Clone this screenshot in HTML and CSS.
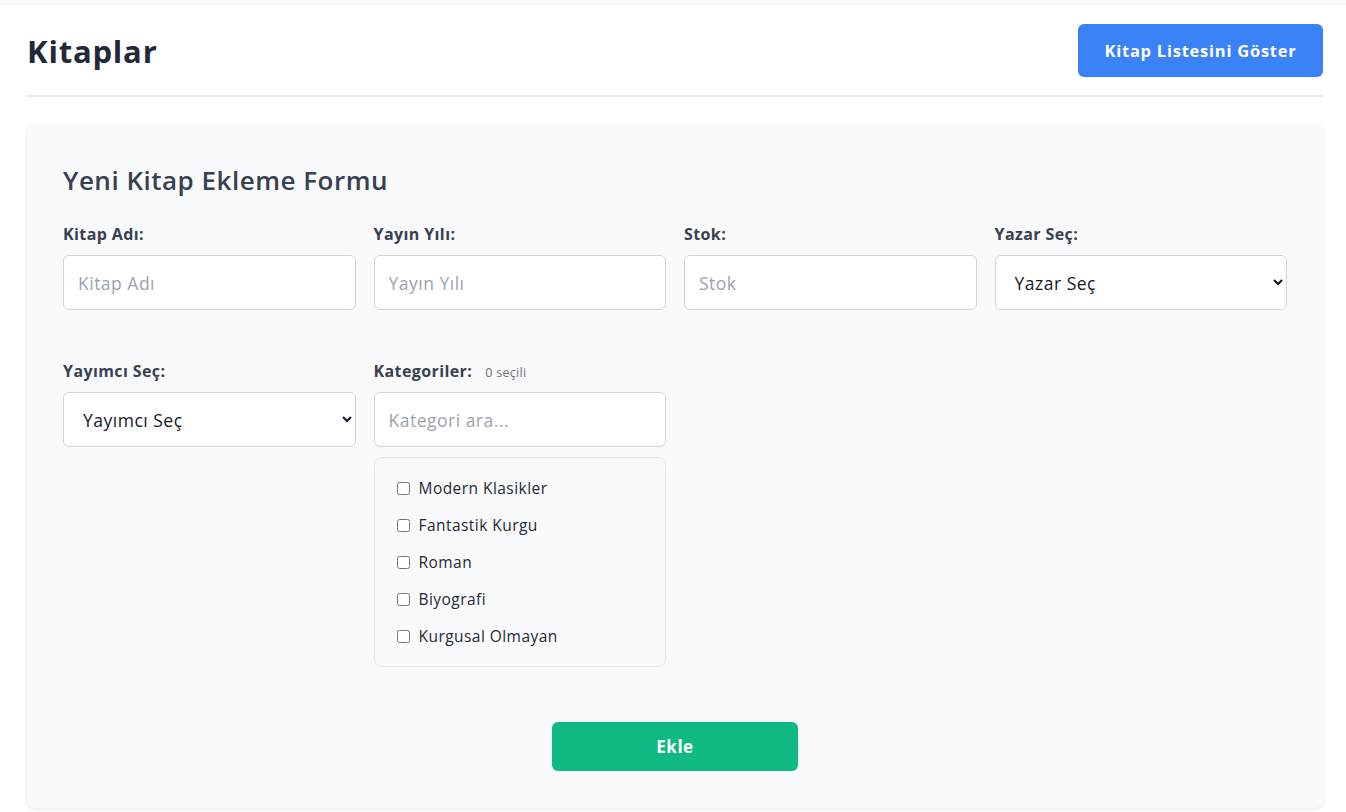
FILE: index.html
```html
<!DOCTYPE html>
<html lang="tr">
<head>
<meta charset="utf-8">
<title>Kitaplar</title>
<link rel="stylesheet" href="styles.css">
</head>
<body>
<div class="page">
  <header class="topbar">
    <h1 class="title">Kitaplar</h1>
    <button class="btn-blue" type="button">Kitap Listesini Göster</button>
  </header>
  <section class="card">
    <h2 class="card-title">Yeni Kitap Ekleme Formu</h2>
    <form class="form">
      <div class="grid">
        <div class="field">
          <label class="label">Kitap Adı:</label>
          <input class="input" type="text" placeholder="Kitap Adı">
        </div>
        <div class="field">
          <label class="label">Yayın Yılı:</label>
          <input class="input" type="text" placeholder="Yayın Yılı">
        </div>
        <div class="field">
          <label class="label">Stok:</label>
          <input class="input" type="text" placeholder="Stok">
        </div>
        <div class="field">
          <label class="label">Yazar Seç:</label>
          <select class="input select"><option>Yazar Seç</option></select>
        </div>
        <div class="field">
          <label class="label">Yayımcı Seç:</label>
          <select class="input select"><option>Yayımcı Seç</option></select>
        </div>
        <div class="field">
          <div class="label-row">
            <label class="label">Kategoriler:</label>
            <span class="count">0 seçili</span>
          </div>
          <input class="input" type="text" placeholder="Kategori ara...">
          <div class="checklist">
            <label class="check"><input type="checkbox"><span>Modern Klasikler</span></label>
            <label class="check"><input type="checkbox"><span>Fantastik Kurgu</span></label>
            <label class="check"><input type="checkbox"><span>Roman</span></label>
            <label class="check"><input type="checkbox"><span>Biyografi</span></label>
            <label class="check"><input type="checkbox"><span>Kurgusal Olmayan</span></label>
          </div>
        </div>
      </div>
      <div class="actions">
        <button class="btn-green" type="button">Ekle</button>
      </div>
    </form>
  </section>
</div>
</body>
</html>
```

FILE: styles.css
```css
* { box-sizing: border-box; }
html, body { margin: 0; padding: 0; background: #ffffff; }
body {
  font-family: "Open Sans", "DejaVu Sans", sans-serif;
  color: #1f2937;
  padding-top: 5px;
}
.page {
  background: #ffffff;
  box-shadow: 0 -1px 8px rgba(0,0,0,0.08);
  padding: 19px 23px 4px 27px;
  min-height: 807px;
}
.topbar {
  display: flex;
  justify-content: space-between;
  align-items: center;
  padding-bottom: 18px;
  border-bottom: 2px solid #e5e7eb;
}
.title {
  margin: 0;
  font-size: 31px;
  font-weight: 700;
  color: #1f2937;
  letter-spacing: 0.8px;
}
.btn-blue {
  background: #3b82f6;
  color: #fff;
  border: none;
  border-radius: 6px;
  width: 245px;
  height: 53px;
  font-family: inherit;
  font-size: 16.5px;
  font-weight: 700;
  letter-spacing: 0.75px;
  cursor: pointer;
}
.card {
  margin-top: 27px;
  background: #f9fafb;
  border-radius: 8px;
  box-shadow: 0 1px 4px rgba(0,0,0,0.10);
  padding: 38px 36px 37px 36px;
}
.card-title {
  margin: 0 0 24px 0;
  font-size: 26px;
  font-weight: 600;
  color: #374151;
  letter-spacing: 0.5px;
}
.grid {
  display: grid;
  grid-template-columns: repeat(4, 1fr);
  column-gap: 18px;
  row-gap: 49px;
  align-items: start;
}
.field { display: flex; flex-direction: column; }
.label {
  display: block;
  font-size: 16px;
  font-weight: 700;
  color: #374151;
  line-height: 24px;
  margin-bottom: 9px;
  letter-spacing: 0.4px;
}
.label-row { display: flex; align-items: baseline; gap: 13px; }
.count { font-size: 12.5px; color: #6b7280; letter-spacing: 0.3px; }
.input {
  width: 100%;
  height: 55px;
  border: 1px solid #d1d5db;
  border-radius: 6px;
  background: #fff;
  padding: 0 14px;
  font-family: inherit;
  font-size: 17.5px;
  letter-spacing: 0.5px;
  color: #111827;
  outline: none;
}
.input::placeholder { color: #9ca3af; }
.select { padding-left: 15px; padding-right: 8px; }
.checklist {
  margin-top: 10px;
  border: 1px solid #e5e7eb;
  border-radius: 8px;
  background: #f9fafb;
  padding: 18px 20px 18px 20px;
  display: flex;
  flex-direction: column;
  gap: 13px;
}
.check {
  display: flex;
  align-items: center;
  gap: 9px;
  font-size: 15.5px;
  letter-spacing: 0.45px;
  line-height: 24px;
  color: #1f2937;
}
.check input { width: 13px; height: 13px; margin: 0 0 0 2px; }
.actions {
  display: flex;
  justify-content: center;
  margin-top: 55px;
}
.btn-green {
  background: #10b981;
  color: #fff;
  border: none;
  border-radius: 6px;
  width: 246px;
  height: 49px;
  font-family: inherit;
  font-size: 17px;
  font-weight: 700;
  letter-spacing: 0.5px;
  cursor: pointer;
}
```
